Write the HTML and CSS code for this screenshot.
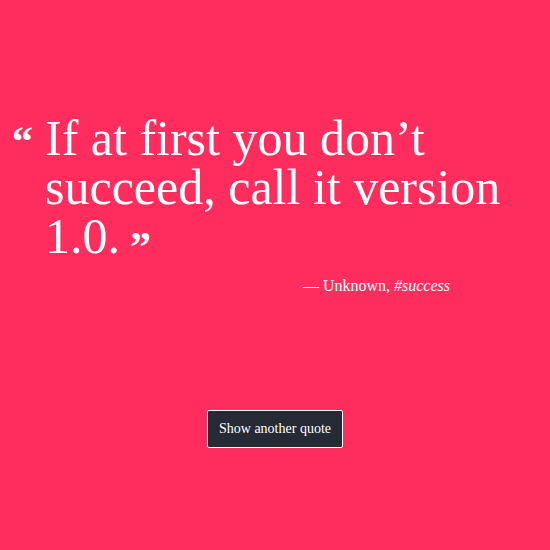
FILE: index.html
```html
<!DOCTYPE html>
<html>
<head>
<meta charset="utf-8">
<link rel="stylesheet" href="styles.css">
</head>
<body>
<main class="page">
  <section class="quote-box">
    <div class="quote">
      <span class="mark mark-open">&ldquo;</span>
      <p class="quote-text">If at first you don’t succeed, call it version 1.0.</p>
    </div>
    <p class="author">— Unknown, <em>#success</em></p>
  </section>
  <div class="actions">
    <button class="btn">Show another quote</button>
  </div>
</main>
</body>
</html>
```
FILE: styles.css
```css
html, body {
  margin: 0;
  padding: 0;
  background: #fe2d5e;
  height: 100%;
}
.page {
  width: 550px;
  height: 550px;
  color: #fff;
  font-family: "Liberation Serif", "DejaVu Serif", serif;
  display: flex;
  flex-direction: column;
}
.quote-box {
  margin: 114px 0 0 12px;
  width: 520px;
}
.quote {
  display: flex;
  align-items: flex-start;
}
.mark-open {
  font-family: "Liberation Serif", serif;
  font-weight: bold;
  line-height: 1;
  font-size: 42px;
  width: 33px;
  margin-top: 6px;
}
.quote-text {
  margin: 0;
  font-size: 50px;
  line-height: 49px;
  flex: 1;
}
.quote-text::after {
  content: "\201D";
  font-weight: bold;
  font-size: 42px;
  line-height: 0;
  margin-left: 10px;
  vertical-align: -8px;
}
.author {
  margin: 16px 0 0 0;
  width: 438px;
  text-align: right;
  font-size: 16px;
}
.actions {
  display: flex;
  justify-content: center;
  margin-top: 115px;
}
.btn {
  background: #262a34;
  color: #fff;
  border: 1px solid #fff;
  border-radius: 2px;
  font-family: "Liberation Serif", serif;
  font-size: 14px;
  width: 136px;
  height: 38px;
  padding: 0;
}
```
